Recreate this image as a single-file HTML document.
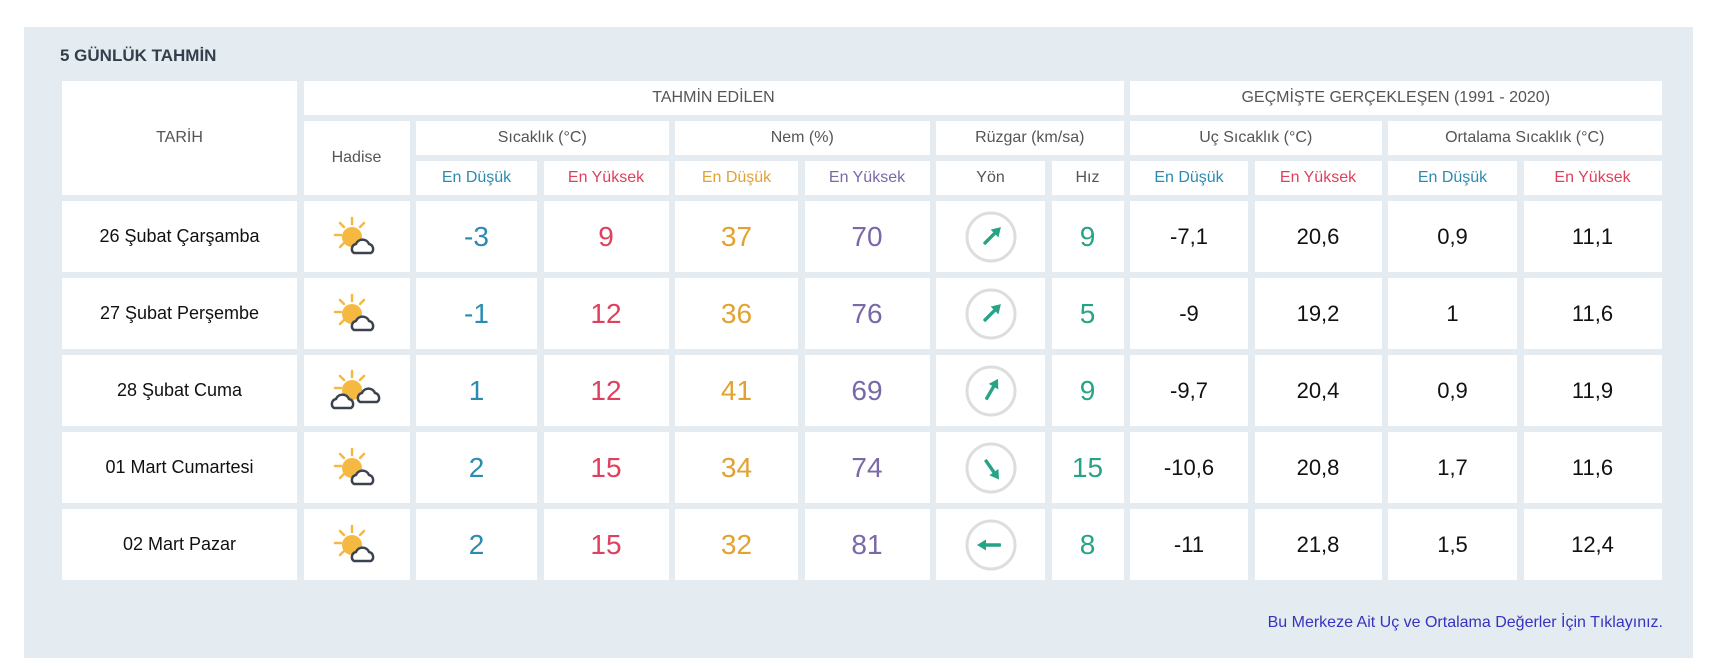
<!DOCTYPE html>
<html><head><meta charset="utf-8"><style>
*{margin:0;padding:0;box-sizing:border-box}
body{width:1718px;height:658px;background:#fff;font-family:"Liberation Sans",sans-serif;position:relative;overflow:hidden}
.panel{position:absolute;left:24px;top:27px;width:1669px;height:631px;background:#e4ecf1}
.title{position:absolute;left:60px;top:46px;font-size:17px;font-weight:bold;color:#343f4c}
.grid{position:absolute;left:62px;top:81px;display:grid;
grid-template-columns:235px 106px 121px 125px 123px 125px 109px 72px 118px 127px 129px 138px;
grid-template-rows:34px 34px 34px 71px 71px 71px 71px 71px;column-gap:6.5px;row-gap:6px}
.grid>div{background:#fff;display:flex;align-items:center;justify-content:center;color:#555;font-size:16px;white-space:nowrap}
.grid>.b{color:#2b8bb0}.grid>.r{color:#e0405e}.grid>.o{color:#e2a231}.grid>.p{color:#7a68a8}.grid>.t{color:#27a386}
.grid>.n{font-size:28px}.grid>.h{font-size:22px;color:#111}.grid>.d{font-size:18px;color:#111}
.link{position:absolute;right:55px;top:614px;font-size:16px;color:#3434c0}
</style></head><body>
<div class="panel"></div>
<div class="title">5 GÜNLÜK TAHMİN</div>
<div class="grid">
<div style="grid-column:1;grid-row:1/4">TARİH</div>
<div style="grid-column:2/9;grid-row:1">TAHMİN EDİLEN</div>
<div style="grid-column:9/13;grid-row:1">GEÇMİŞTE GERÇEKLEŞEN (1991 - 2020)</div>
<div style="grid-column:2;grid-row:2/4">Hadise</div>
<div style="grid-column:3/5;grid-row:2">Sıcaklık (°C)</div>
<div style="grid-column:5/7;grid-row:2">Nem (%)</div>
<div style="grid-column:7/9;grid-row:2">Rüzgar (km/sa)</div>
<div style="grid-column:9/11;grid-row:2">Uç Sıcaklık (°C)</div>
<div style="grid-column:11/13;grid-row:2">Ortalama Sıcaklık (°C)</div>
<div class="b" style="grid-row:3;grid-column:3">En Düşük</div>
<div class="r" style="grid-row:3;grid-column:4">En Yüksek</div>
<div class="o" style="grid-row:3;grid-column:5">En Düşük</div>
<div class="p" style="grid-row:3;grid-column:6">En Yüksek</div>
<div style="grid-row:3;grid-column:7">Yön</div>
<div style="grid-row:3;grid-column:8">Hız</div>
<div class="b" style="grid-row:3;grid-column:9">En Düşük</div>
<div class="r" style="grid-row:3;grid-column:10">En Yüksek</div>
<div class="b" style="grid-row:3;grid-column:11">En Düşük</div>
<div class="r" style="grid-row:3;grid-column:12">En Yüksek</div>

<div class="d">26 Şubat Çarşamba</div>
<div><svg width="54" height="44" viewBox="0 0 54 44"><g stroke="#f5b942" stroke-width="2.5" stroke-linecap="round"><path d="M22 3v6M10 8l4 4M34 8l-4 4M5 20h6M10 32l4-4"/></g><circle cx="22" cy="22" r="10" fill="#f5b942"/><path d="M24 38a5 5 0 0 1 2-9 7 7 0 0 1 13 0 5 5 0 0 1 2 9z" fill="#fff" stroke="#3c4350" stroke-width="2.5" stroke-linejoin="round"/></svg></div>
<div class="b n">-3</div><div class="r n">9</div><div class="o n">37</div><div class="p n">70</div>
<div><svg width="56" height="56" viewBox="0 0 56 56"><circle cx="28" cy="28" r="24" fill="none" stroke="#ddd" stroke-width="3"/><g transform="rotate(45 28 28)" fill="#27a386"><rect x="26.3" y="22" width="3.4" height="16" rx="1"/><path d="M22.5 23l5.5-9 5.5 9z"/></g></svg></div>
<div class="t n">9</div><div class="h">-7,1</div><div class="h">20,6</div><div class="h">0,9</div><div class="h">11,1</div>

<div class="d">27 Şubat Perşembe</div>
<div><svg width="54" height="44" viewBox="0 0 54 44"><g stroke="#f5b942" stroke-width="2.5" stroke-linecap="round"><path d="M22 3v6M10 8l4 4M34 8l-4 4M5 20h6M10 32l4-4"/></g><circle cx="22" cy="22" r="10" fill="#f5b942"/><path d="M24 38a5 5 0 0 1 2-9 7 7 0 0 1 13 0 5 5 0 0 1 2 9z" fill="#fff" stroke="#3c4350" stroke-width="2.5" stroke-linejoin="round"/></svg></div>
<div class="b n">-1</div><div class="r n">12</div><div class="o n">36</div><div class="p n">76</div>
<div><svg width="56" height="56" viewBox="0 0 56 56"><circle cx="28" cy="28" r="24" fill="none" stroke="#ddd" stroke-width="3"/><g transform="rotate(45 28 28)" fill="#27a386"><rect x="26.3" y="22" width="3.4" height="16" rx="1"/><path d="M22.5 23l5.5-9 5.5 9z"/></g></svg></div>
<div class="t n">5</div><div class="h">-9</div><div class="h">19,2</div><div class="h">1</div><div class="h">11,6</div>

<div class="d">28 Şubat Cuma</div>
<div><svg width="58" height="46" viewBox="0 0 58 46"><g stroke="#f5b942" stroke-width="2.5" stroke-linecap="round"><path d="M24 3v6M12 8l4 4M36 8l-4 4M7 20h6"/></g><circle cx="24" cy="22" r="10" fill="#f5b942"/><path d="M6 40a5 5 0 0 1 2-9 7 7 0 0 1 13 0 5 5 0 0 1 2 9z" fill="#fff" stroke="#3c4350" stroke-width="2.5" stroke-linejoin="round"/><path d="M32 34a5 5 0 0 1 2-9 7 7 0 0 1 13 0 5 5 0 0 1 2 9z" fill="#fff" stroke="#3c4350" stroke-width="2.5" stroke-linejoin="round"/></svg></div>
<div class="b n">1</div><div class="r n">12</div><div class="o n">41</div><div class="p n">69</div>
<div><svg width="56" height="56" viewBox="0 0 56 56"><circle cx="28" cy="28" r="24" fill="none" stroke="#ddd" stroke-width="3"/><g transform="rotate(30 28 28)" fill="#27a386"><rect x="26.3" y="22" width="3.4" height="16" rx="1"/><path d="M22.5 23l5.5-9 5.5 9z"/></g></svg></div>
<div class="t n">9</div><div class="h">-9,7</div><div class="h">20,4</div><div class="h">0,9</div><div class="h">11,9</div>

<div class="d">01 Mart Cumartesi</div>
<div><svg width="54" height="44" viewBox="0 0 54 44"><g stroke="#f5b942" stroke-width="2.5" stroke-linecap="round"><path d="M22 3v6M10 8l4 4M34 8l-4 4M5 20h6M10 32l4-4"/></g><circle cx="22" cy="22" r="10" fill="#f5b942"/><path d="M24 38a5 5 0 0 1 2-9 7 7 0 0 1 13 0 5 5 0 0 1 2 9z" fill="#fff" stroke="#3c4350" stroke-width="2.5" stroke-linejoin="round"/></svg></div>
<div class="b n">2</div><div class="r n">15</div><div class="o n">34</div><div class="p n">74</div>
<div><svg width="56" height="56" viewBox="0 0 56 56"><circle cx="28" cy="28" r="24" fill="none" stroke="#ddd" stroke-width="3"/><g transform="rotate(145 28 28)" fill="#27a386"><rect x="26.3" y="22" width="3.4" height="16" rx="1"/><path d="M22.5 23l5.5-9 5.5 9z"/></g></svg></div>
<div class="t n">15</div><div class="h">-10,6</div><div class="h">20,8</div><div class="h">1,7</div><div class="h">11,6</div>

<div class="d">02 Mart Pazar</div>
<div><svg width="54" height="44" viewBox="0 0 54 44"><g stroke="#f5b942" stroke-width="2.5" stroke-linecap="round"><path d="M22 3v6M10 8l4 4M34 8l-4 4M5 20h6M10 32l4-4"/></g><circle cx="22" cy="22" r="10" fill="#f5b942"/><path d="M24 38a5 5 0 0 1 2-9 7 7 0 0 1 13 0 5 5 0 0 1 2 9z" fill="#fff" stroke="#3c4350" stroke-width="2.5" stroke-linejoin="round"/></svg></div>
<div class="b n">2</div><div class="r n">15</div><div class="o n">32</div><div class="p n">81</div>
<div><svg width="56" height="56" viewBox="0 0 56 56"><circle cx="28" cy="28" r="24" fill="none" stroke="#ddd" stroke-width="3"/><g transform="rotate(-90 28 28)" fill="#27a386"><rect x="26.3" y="22" width="3.4" height="16" rx="1"/><path d="M22.5 23l5.5-9 5.5 9z"/></g></svg></div>
<div class="t n">8</div><div class="h">-11</div><div class="h">21,8</div><div class="h">1,5</div><div class="h">12,4</div>
</div>
<div class="link">Bu Merkeze Ait Uç ve Ortalama Değerler İçin Tıklayınız.</div>
</body></html>
